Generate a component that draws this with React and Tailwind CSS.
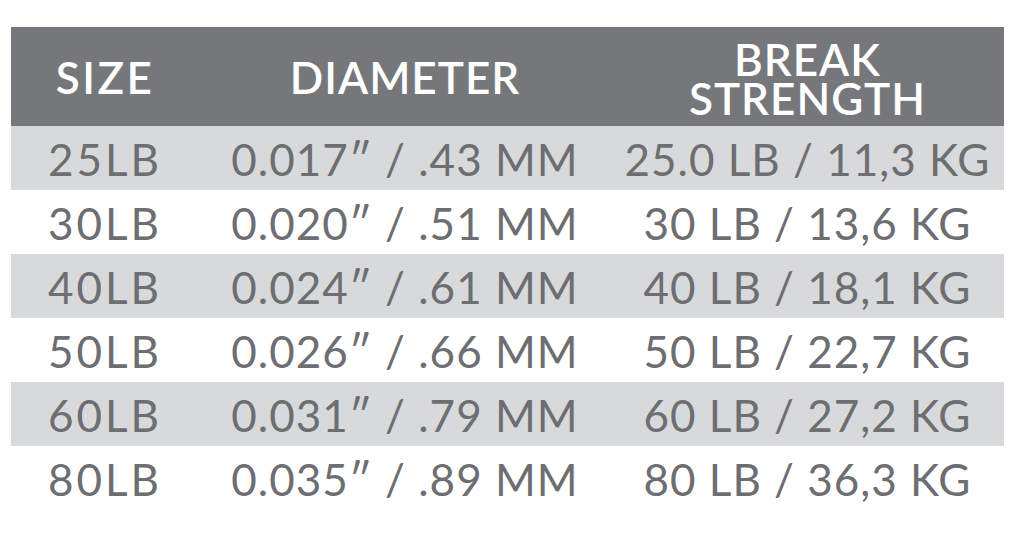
export default function App() {
  const rows = [
    ["25LB", "0.017\u2033 / .43 MM", "25.0 LB / 11,3 KG"],
    ["30LB", "0.020\u2033 / .51 MM", "30 LB / 13,6 KG"],
    ["40LB", "0.024\u2033 / .61 MM", "40 LB / 18,1 KG"],
    ["50LB", "0.026\u2033 / .66 MM", "50 LB / 22,7 KG"],
    ["60LB", "0.031\u2033 / .79 MM", "60 LB / 27,2 KG"],
    ["80LB", "0.035\u2033 / .89 MM", "80 LB / 36,3 KG"],
  ];
  return (
    <div className="w-[1024px] h-[548px] bg-white pt-[27px] pl-[11px] pr-[20px]" style={{ fontFamily: "Lato, 'Open Sans', sans-serif" }}>
      <div className="w-[993px]">
        <div className="grid grid-cols-[188px_412px_393px] h-[99px] bg-[#76777b] text-white items-center text-[44px] font-semibold tracking-[1px]">
          <div className="text-center tracking-[2.5px]">SIZE</div>
          <div className="text-center">DIAMETER</div>
          <div className="text-center flex flex-col items-center pt-[4px]">
            <span className="leading-[39px]">BREAK</span>
            <span className="leading-[39px]">STRENGTH</span>
          </div>
        </div>
        {rows.map((r, i) => (
          <div key={i} className={`grid grid-cols-[188px_412px_393px] h-[64px] items-center text-[44px] text-[#6d6e71] tracking-[1px] ${i % 2 === 0 ? "bg-[#d8d9da]" : "bg-white"}`}>
            <div className="text-center tracking-[3px]">{r[0]}</div>
            <div className="text-center">{r[1]}</div>
            <div className="text-center">{r[2]}</div>
          </div>
        ))}
      </div>
    </div>
  );
}
